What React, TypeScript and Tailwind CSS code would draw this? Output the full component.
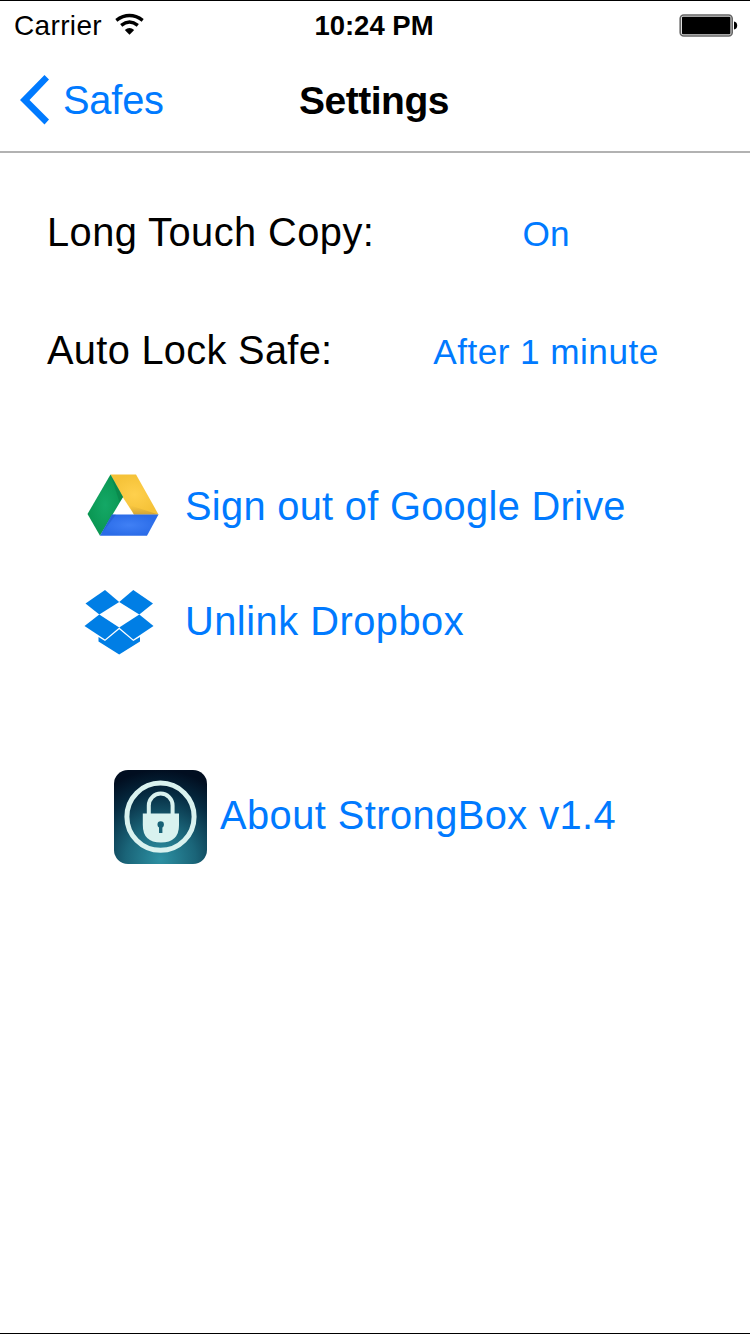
import type { ReactNode } from "react";

function StatusBar() {
  return (
    <div className="flex h-[49px] items-start text-[28px] leading-8">
      <div className="flex w-[250px] pl-[14px] pt-[9px]">
        <span className="w-[101px] whitespace-nowrap tracking-[0.35px]">Carrier</span>
        <svg className="mt-[3px] h-[23px] w-[30px]" viewBox="0 0 30 23" fill="none" stroke="#000" strokeWidth="3.4">
          <path d="M1.3 7.3Q14.5-2.2 27.7 7.3" />
          <path d="M6.2 12.4Q14.5 5.8 22.8 12.4" />
          <path d="M9.8 16.9Q14.5 13.1 19.2 16.9L14.5 21.8Z" fill="#000" stroke="none" />
        </svg>
      </div>
      <div className="w-[250px] pr-[2px] pt-[9px] text-center text-[27.5px] font-bold">10:24 PM</div>
      <div className="flex w-[250px] justify-end pr-3 pt-[13px]">
        <svg className="h-[24px] w-[59px]" viewBox="0 0 59 24">
          <rect x="1.2" y="1" width="52" height="21" rx="3.5" fill="#ddd" stroke="#666" strokeWidth="1.6" />
          <rect x="3" y="2.8" width="48.4" height="17.4" rx="1" fill="#000" />
          <path d="M55 7.5Q58.2 8 58.2 11.5T55 15.5Z" fill="#000" />
        </svg>
      </div>
    </div>
  );
}

function NavBar() {
  return (
    <div className="flex h-[103px] items-start border-b-2 border-[#b2b2b2] text-[39.8px] leading-[48px]">
      <div className="flex w-[250px] pl-[19px] pt-[26px] text-[#007aff]">
        <svg className="-mt-px h-[50px] w-[44px]" viewBox="0 0 44 50">
          <path d="M25.5 0L30 4.5 10.5 25 30 44.5 25.5 49.5 1 25Z" fill="#007aff" />
        </svg>
        <span className="tracking-[-0.2px]">Safes</span>
      </div>
      <div className="w-[250px] pr-[2px] pt-[27px] text-center text-[39px] font-bold tracking-[-0.5px]">Settings</div>
    </div>
  );
}

function ActionRow({ icon, children }: { icon: ReactNode; children: ReactNode }) {
  return (
    <div className="flex h-[72px] items-center">
      {icon}
      {children}
    </div>
  );
}

function DriveIcon() {
  return (
    <svg className="h-[72px] w-[100px]" viewBox="85 469 100 72">
      <defs>
        <radialGradient id="gy"><stop stopColor="#ffd04d" /><stop offset="1" stopColor="#f5c238" /></radialGradient>
        <radialGradient id="gb"><stop stopColor="#4080f5" /><stop offset="1" stopColor="#2b6ce8" /></radialGradient>
        <radialGradient id="gg"><stop stopColor="#14a866" /><stop offset="1" stopColor="#0a9652" /></radialGradient>
        <linearGradient id="gs" x1="0" y1="0" x2="0" y2="1"><stop stopColor="#e0b13a" stopOpacity="0" /><stop offset="1" stopColor="#d1a336" /></linearGradient>
      </defs>
      <path d="M110.5 474.5H136L158.5 514.5H134L122 496Z" fill="url(#gy)" />
      <path d="M129 505L158.5 514.5H134Z" fill="url(#gs)" />
      <path d="M110.5 474.5L123 497 100 535.8 87.5 514Z" fill="url(#gg)" />
      <path d="M110.5 474.5L123 497 119.5 502Z" fill="#0a8147" opacity=".6" />
      <path d="M112 514.5H158.5L147 535.8H100Z" fill="url(#gb)" />
      <path d="M112 514.5L100 535.8 116 514.5Z" fill="#1954bd" opacity=".4" />
    </svg>
  );
}

function DropboxIcon() {
  return (
    <svg className="h-[72px] w-[102px]" viewBox="83 586 102 72" fill="#007ee5">
      <path d="M105 590L119.2 602 99.3 614.6 85.5 603.5Z" />
      <path d="M133.3 590L153 603.5 139.3 614.6 119.2 602Z" />
      <path d="M99.3 614.6L119.2 627.6 105 639.6 84.5 626Z" />
      <path d="M139.3 614.6L153.5 626 133.3 639.6 119.2 627.6Z" />
      <path d="M119.2 629.2L133.3 641.1 140 637V641.5L119.2 654.5 98.5 641.5V637L105 641.1Z" />
    </svg>
  );
}

function StrongBoxIcon() {
  return (
    <svg className="h-[94px] w-[106px]" viewBox="0 0 106 94">
      <defs>
        <radialGradient id="sb" cx="0.5" cy="0.95" r="0.95">
          <stop stopColor="#2d91a3" />
          <stop offset=".4" stopColor="#1a6478" />
          <stop offset=".75" stopColor="#052a40" />
          <stop offset="1" stopColor="#010e20" />
        </radialGradient>
      </defs>
      <rect width="93" height="94" rx="14" fill="url(#sb)" />
      <circle cx="46.5" cy="46.7" r="33.6" fill="none" stroke="#d9f2ef" strokeWidth="5" />
      <path d="M34.8 44V35.5a11.9 11.9 0 0 1 23.8 0V44" fill="none" stroke="#d9f2ef" strokeWidth="4" />
      <path d="M28.8 43.5H65V55Q65 72.5 46.9 72.5T28.8 55Z" fill="#d9f2ef" />
      <circle cx="46.7" cy="54.5" r="3.2" fill="#176176" />
      <path d="M45 55H48.4V63H45Z" fill="#176176" />
    </svg>
  );
}

export default function App() {
  return (
    <div className="flex h-[1334px] w-[750px] flex-col border-b border-t border-black bg-white font-['Liberation_Sans',Arial,sans-serif] text-black">
      <StatusBar />
      <NavBar />
      <main className="flex flex-col whitespace-nowrap text-[39.8px] leading-[48px]">
        <div className="flex pt-[55px]">
          <div className="w-[386px] pl-[47px] tracking-[0.45px]">Long Touch Copy:</div>
          <button className="w-[320px] text-center text-[35.2px] leading-[52px]">
            <span className="text-[#007aff]">On</span>
          </button>
        </div>
        <div className="flex pt-[66px]">
          <div className="w-[386px] pl-[47px] tracking-[0.3px]">Auto Lock Safe:</div>
          <button className="w-[320px] text-center text-[35.2px] leading-[52px]">
            <span className="tracking-[0.45px] text-[#007aff]">After 1 minute</span>
          </button>
        </div>
        <div className="flex flex-col gap-[45px] pt-[91px] text-[#007aff]">
          <div className="pl-[85px]">
            <ActionRow icon={<DriveIcon />}><span className="pt-[1px] tracking-[0.3px]">Sign out of Google Drive</span></ActionRow>
          </div>
          <div className="pl-[83px]">
            <ActionRow icon={<DropboxIcon />}><span className="pb-[3px] tracking-[0.5px]">Unlink Dropbox</span></ActionRow>
          </div>
        </div>
        <div className="flex items-center pl-[114px] pt-[112px] text-[#007aff]">
          <StrongBoxIcon />
          <span className="pb-1 tracking-[0.45px]">About StrongBox v1.4</span>
        </div>
      </main>
    </div>
  );
}
